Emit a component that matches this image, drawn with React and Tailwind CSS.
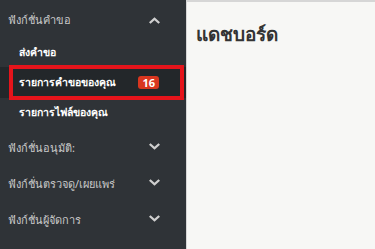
import React from 'react';

const font = { fontFamily: 'Tahoma, "Noto Sans", "DejaVu Sans", sans-serif' };

const Chevron = ({ up }) => (
  <svg viewBox="0 0 10 6" className="w-[11px] h-[7px]" fill="currentColor">
    {up ? (
      <path d="M5 0 L10 4.6 L8.6 6 L5 2.7 L1.4 6 L0 4.6 Z" />
    ) : (
      <path d="M5 6 L10 1.4 L8.6 0 L5 3.3 L1.4 0 L0 1.4 Z" />
    )}
  </svg>
);

const GroupHeader = ({ label, up }) => (
  <div className="h-[36px] flex items-center justify-between pl-2 pr-[26px] text-[#c9c9c9] text-[11px]">
    <span>{label}</span>
    <span className={up ? 'text-[#cfcfcf]' : 'text-[#cfcfcf] -mt-[3px]'}>
      <Chevron up={up} />
    </span>
  </div>
);

export default function App() {
  return (
    <div className="flex w-[375px] h-[249px] overflow-hidden" style={font}>
      <aside className="w-[186px] shrink-0 bg-[#2f3337] flex flex-col pt-[2px]">
        <GroupHeader label="ฟังก์ชั่นคำขอ" up />
        <div className="flex flex-col">
          <div className="h-[29px] flex items-center pl-[19px] text-white font-bold text-[10.5px]">
            ส่งคำขอ
          </div>
          <div className="relative h-[31px] flex items-center pl-[19px] pr-[27px] justify-between bg-[#23272a] text-white font-bold text-[10.5px]">
            <span>รายการคำขอของคุณ</span>
            <span className="bg-[#d9361f] rounded-[3px] px-[4px] h-[13px] flex items-center text-[11px] leading-none">16</span>
            <div className="absolute left-[9px] right-[2px] top-[-2px] bottom-[-2px] border-[4px] border-[#e5141b] pointer-events-none" />
          </div>
          <div className="h-[30px] flex items-center pl-[19px] text-white font-bold text-[10.5px]">
            รายการไฟล์ของคุณ
          </div>
        </div>
        <div className="pt-[2px]">
          <GroupHeader label="ฟังก์ชั่นอนุมัติ:" />
          <GroupHeader label="ฟังก์ชั่นตรวจดู/เผยแพร่" />
          <GroupHeader label="ฟังก์ชั่นผู้จัดการ" />
        </div>
      </aside>
      <main className="flex-1 bg-[#f7f7f5] border-t-2 border-l border-[#d6d6d6] pl-[9px] pt-[18px]">
        <h1 className="text-[19px] font-bold text-[#333]">แดชบอร์ด</h1>
      </main>
    </div>
  );
}
